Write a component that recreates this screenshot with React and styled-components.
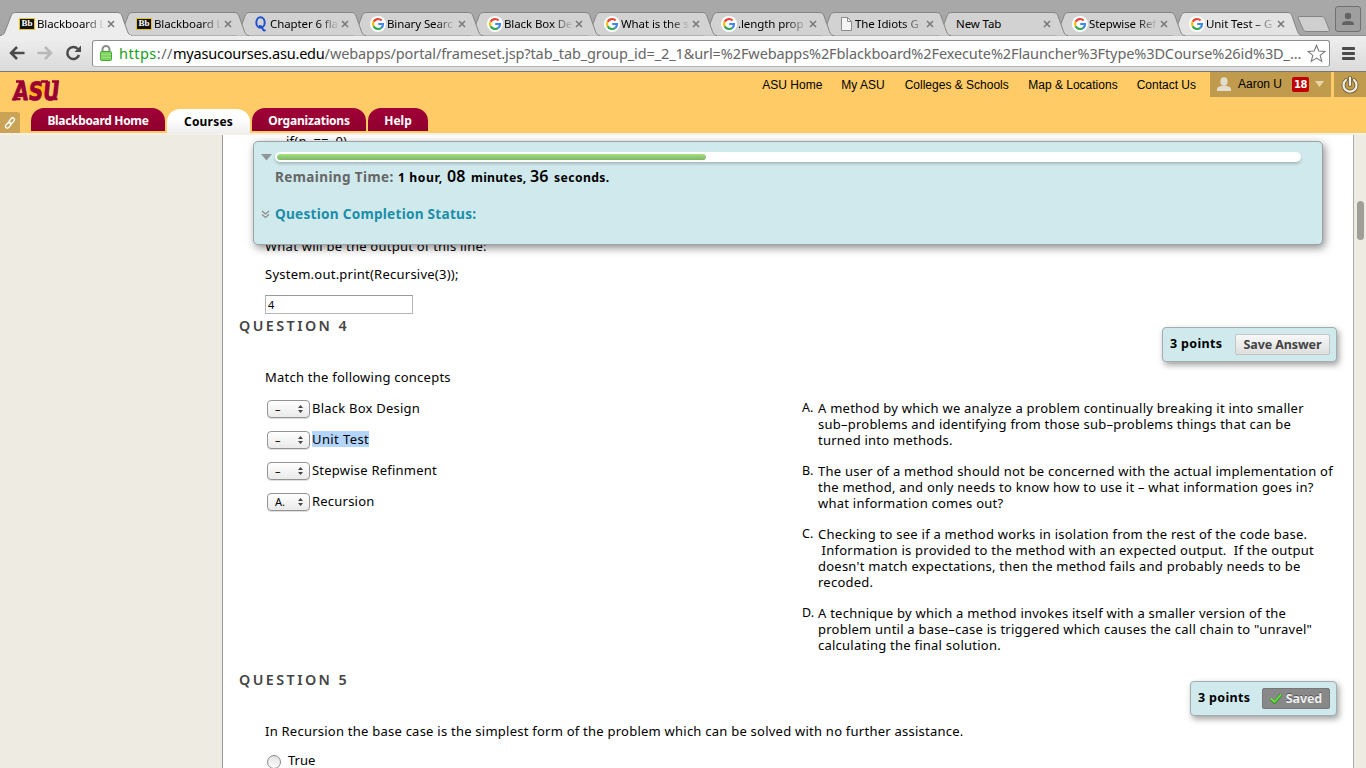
import React from 'react';
import styled, { createGlobalStyle, css } from 'styled-components';

const GlobalStyle = createGlobalStyle`
  *, *::before, *::after { box-sizing: border-box; }
  html, body { margin: 0; padding: 0; overflow: hidden; }
  body { font-family: 'Noto Sans', 'Open Sans', sans-serif; font-size: 13px; line-height: 16px; color: #000; }
`;

const Window = styled.div`
  width: 1366px;
  height: 768px;
  display: flex;
  flex-direction: column;
  overflow: hidden;
  position: relative;
`;

/* ---------- browser chrome ---------- */
const TabStrip = styled.div`
  height: 35px;
  padding-top: 12px;
  display: flex;
  flex: none;
  position: relative;
  background: linear-gradient(#a9a9a9, #a6a6a6);
`;
const TabBox = styled.div`
  width: 117px;
  height: 24px;
  flex: none;
  position: relative;
  display: flex;
  align-items: center;
  padding-left: ${(p) => (p.$bare ? 20 : 19)}px;
  z-index: ${(p) => p.$z};
`;
const TabShape = styled.svg`
  position: absolute;
  left: 0;
  top: 0;
`;
const Favicon = styled.span`
  position: relative;
  width: 16px;
  height: 16px;
  margin-right: ${(p) => (p.$wide ? 2 : 1)}px;
  flex: none;
  display: flex;
`;
const BbIcon = styled.span`
  width: 16px;
  height: 12px;
  margin-top: 2px;
  background: #111;
  border: 1px solid #e9c414;
  color: #fff;
  font: bold 9px/9px 'Liberation Serif', serif;
  text-align: center;
`;
const TabTitle = styled.span`
  position: relative;
  flex: 1;
  min-width: 0;
  white-space: nowrap;
  font-size: 11.5px;
  letter-spacing: -0.1px;
  line-height: 16px;
  mask-image: ${(p) => (p.$bare ? 'none' : 'linear-gradient(90deg, #000 70%, transparent 100%)')};
`;
const TabClose = styled.svg`
  position: relative;
  margin: 0 2px 0 2px;
  flex: none;
`;
const NewTab = styled.svg`
  flex: none;
  margin: 4px 0 0 10px;
`;
const Profile = styled.div`
  position: absolute;
  right: 5px;
  top: 6px;
  width: 26px;
  height: 26px;
  border: 1px solid #707070;
  border-radius: 3px;
  background: #9f9f9f;
  display: flex;
  justify-content: center;
  align-items: center;
`;
const Toolbar = styled.div`
  height: 37px;
  flex: none;
  display: flex;
  align-items: center;
  padding: 0 11px 1px 9px;
  border-top: 1px solid #8f8f8f;
  border-bottom: 1px solid #777;
  background: linear-gradient(#efefef, #dadada);
  position: relative;
`;
const NavIcons = styled.div`
  width: 83px;
  display: flex;
  gap: 12px;
  flex: none;
`;
const Omnibox = styled.div`
  width: 1238px;
  height: 27px;
  flex: none;
  display: flex;
  align-items: center;
  border: 1px solid #8e8e8e;
  border-bottom-color: #b4b4b4;
  border-radius: 3px;
  background: #fff;
  padding: 0 3px 0 6px;
`;
const OmniIcon = styled.svg` flex: none; `;
const Url = styled.span`
  flex: 1;
  min-width: 0;
  margin-left: 6px;
  white-space: nowrap;
  font-size: 14.5px;
  line-height: 22px;
  color: #666;
`;
const Scheme = styled.span` letter-spacing: 0.5px; `;
const Secure = styled.span` color: #14a01c; `;
const Host = styled.span` color: #000; letter-spacing: -0.2px; `;
const Path = styled.span` letter-spacing: -0.11px; `;
const MenuIcon = styled.div`
  width: 13px;
  margin-left: 12px;
  display: flex;
  flex-direction: column;
  gap: 2px;
`;
const MenuBar = styled.span`
  height: 3px;
  border-radius: 1px;
  background: #4b4b4b;
`;

/* ---------- site header ---------- */
const SiteHeader = styled.header`
  height: 61px;
  flex: none;
  background: #fecb66;
  display: flex;
  flex-direction: column;
  justify-content: space-between;
`;
const HeaderTop = styled.div`
  display: flex;
  height: 36px;
  justify-content: space-between;
  align-items: flex-start;
`;
const Logo = styled.svg` margin: 7px 0 0 11px; overflow: visible; `;
const Links = styled.nav`
  display: flex;
  font: 12px/14px 'Liberation Sans', Arial, sans-serif;
`;
const TopLink = styled.a`
  margin: 6px ${(p) => p.$gap}px 0 0;
  white-space: nowrap;
`;
const UserBox = styled.div`
  width: 121px;
  height: 25px;
  display: flex;
  align-items: center;
  background: #c19b4d;
  padding: 0 0 1px 7px;
  margin-right: 3px;
  flex: none;
`;
const UserName = styled.span` margin: 0 10px 0 7px; white-space: nowrap; `;
const Count = styled.span`
  width: 17px;
  height: 15px;
  border-radius: 2px;
  background: #c00000;
  color: #fff;
  font: bold 10px/15px 'DejaVu Sans', sans-serif;
  letter-spacing: -0.5px;
  text-align: center;
  margin-right: 6px;
`;
const PowerBox = styled.div`
  width: 32px;
  height: 25px;
  background: #c19b4d;
  display: flex;
  align-items: center;
  justify-content: center;
  flex: none;
`;
const HeaderTabs = styled.div`
  display: flex;
  align-items: flex-start;
  height: 25px;
`;
const LinkChip = styled.span`
  width: 20px;
  height: 21px;
  margin: 4px 11px 0 0;
  border-radius: 0 3px 0 0;
  background: #cba356;
  display: flex;
  align-items: center;
  justify-content: center;
`;
const SiteTab = styled.a`
  width: ${(p) => p.$w}px;
  height: 23px;
  margin-right: 2px;
  border-radius: 13px 13px 0 0;
  background: linear-gradient(#a00038, #8f002c);
  color: #fff;
  font-weight: bold;
  font-size: 12px;
  line-height: 25px;
  text-align: center;
  letter-spacing: ${(p) => p.$ls || 0}px;
  white-space: nowrap;
  ${(p) => p.$active && css`
    margin-top: 1px;
    height: 24px;
    background: linear-gradient(#fff 40%, #eeeeee);
    color: #000;
  `}
`;

/* ---------- page ---------- */
const Page = styled.div`
  flex: 1;
  display: flex;
  border-top: 2px solid #f4f0e6;
  background: #eeebe3;
  overflow: hidden;
  position: relative;
`;
const Main = styled.main`
  margin-left: 222px;
  width: 1132px;
  flex: none;
  background: #fff;
  border-left: 1px solid #999;
  border-right: 1px solid #aaa;
  padding: 0 16px;
`;
const ScrollThumb = styled.div`
  width: 7px;
  height: 39px;
  margin: 66px 0 0 3px;
  border-radius: 4px;
  background: #9f9f97;
`;
const Prev = styled.div`
  height: 183px;
  padding-left: 26px;
  margin-top: -2px;
  display: flex;
  flex-direction: column;
`;
const CodeLine = styled.div`
  margin: 0 0 89px 21px;
  word-spacing: 3px;
  letter-spacing: 0.25px;
`;
const Line = styled.p`
  margin: 0 0 ${(p) => p.$gap || 0}px;
  white-space: pre;
  letter-spacing: 0.238px;
`;
const Answer = styled.div`
  width: 148px;
  height: 19px;
  border: 1px solid #b5b5b5;
  border-top-color: #999;
  padding-left: 2px;
  font-size: 11px;
  line-height: 18px;
`;
const Question = styled.section` height: 354px; `;
const QuestionHead = styled.div`
  height: 20px;
  display: flex;
  justify-content: space-between;
  align-items: flex-start;
`;
const QuestionTitle = styled.h3`
  margin: 0;
  font-size: 14.3px;
  font-weight: 650;
  line-height: 20px;
  letter-spacing: 2.45px;
  color: #444;
`;
const Points = styled.div`
  width: ${(p) => p.$w}px;
  height: 35px;
  margin-top: 11px;
  flex: none;
  display: flex;
  justify-content: space-between;
  align-items: center;
  padding: 0 6px 0 7px;
  background: #d0e9ed;
  border: 1px solid #a3acae;
  border-radius: 4px;
  box-shadow: 2px 3px 6px rgba(0, 0, 0, 0.38);
`;
const PointsLabel = styled.span`
  font-size: 12.5px;
  font-weight: bold;
  letter-spacing: 0.35px;
  margin-top: -2px;
`;
const SaveButton = styled.button`
  width: ${(p) => p.$w}px;
  height: 21px;
  padding: 0;
  display: flex;
  align-items: center;
  justify-content: center;
  gap: 4px;
  border: 1px solid #c4c4c4;
  border-radius: 2px;
  background: linear-gradient(#f8f8f8, #dedede);
  font: bold 12.5px/18px 'Noto Sans', sans-serif;
  letter-spacing: -0.1px;
  color: #444;
  white-space: nowrap;
  ${(p) => p.$saved && css`
    background: #888;
    border-color: #777;
    color: #eee;
    text-shadow: 0 -1px 0 #555;
  `}
`;
const QuestionBody = styled.div`
  padding: 33px 0 0 26px;
`;
const Columns = styled.div`
  display: flex;
  padding-top: 15px;
`;
const MatchList = styled.div`
  width: 537px;
  flex: none;
  display: flex;
  flex-direction: column;
  gap: 15px;
  padding-left: 2px;
`;
const MatchRow = styled.div`
  height: 16px;
  display: flex;
  align-items: flex-start;
`;
const Select = styled.span`
  width: 43px;
  height: 18px;
  margin-right: 2px;
  border: 1px solid #949494;
  border-radius: 4px;
  background: linear-gradient(#fff, #eaeaea);
  box-shadow: 0 1px 0 rgba(0, 0, 0, 0.12);
  display: flex;
  align-items: center;
  justify-content: space-between;
  padding: 0 6px 0 7px;
  font-size: 11px;
`;
const Term = styled.span`
  letter-spacing: ${(p) => (p.$marked ? 0.4 : 0.22)}px;
  white-space: nowrap;
  background: ${(p) => (p.$marked ? '#b4d5fe' : 'transparent')};
`;
const Definitions = styled.div`
  display: flex;
  flex-direction: column;
  gap: 15px;
`;
const Definition = styled.div`
  display: grid;
  grid-template-columns: 16px 1fr;
`;
const Letter = styled.span`
  font-size: 12.5px;
  line-height: 15px;
  white-space: nowrap;
`;
const RadioRow = styled.label`
  display: flex;
  margin-top: 13px;
  padding-left: 2px;
`;
const Radio = styled.span`
  width: 14px;
  height: 14px;
  margin: 3px 7px 0 0;
  border: 1px solid #888;
  border-radius: 50%;
  background: linear-gradient(#e2e2e2, #fff);
`;

/* ---------- floating timer ---------- */
const Timer = styled.aside`
  position: absolute;
  left: 253px;
  top: 6px;
  width: 1070px;
  height: 104px;
  padding: 10px 21px 0 7px;
  background: #d0e9ed;
  border: 1px solid #9aa3a5;
  border-radius: 5px;
  box-shadow: 2px 3px 8px rgba(0, 0, 0, 0.45);
`;
const TimerRow = styled.div`
  display: flex;
  align-items: center;
  height: ${(p) => p.$h}px;
  margin-top: ${(p) => p.$top || 0}px;
`;
const Mark = styled.span`
  width: 14px;
  flex: none;
  display: flex;
  align-items: center;
`;
const Track = styled.div`
  width: 1026px;
  height: 10px;
  padding: 2px;
  border-radius: 5px;
  background: #fff;
  box-shadow: 0 2px 3px rgba(0, 0, 0, 0.2);
`;
const Fill = styled.div`
  width: 429px;
  height: 6px;
  border-radius: 3px;
  background: linear-gradient(#a4e084, #7fb563);
`;
const Remaining = styled.div`
  font-weight: bold;
  font-size: 12.2px;
  letter-spacing: 0.4px;
  white-space: nowrap;
  display: flex;
  align-items: baseline;
  line-height: 20px;
`;
const RemainingLabel = styled.span`
  width: 123px;
  font-size: 13.5px;
  color: #666;
`;
const Unit = styled.span`
  width: ${(p) => p.$w}px;
  letter-spacing: ${(p) => p.$ls || 0.4}px;
`;
const Digits = styled.span`
  width: ${(p) => p.$w}px;
  font-size: 16px;
  font-weight: 600;
  letter-spacing: 0;
`;
const Status = styled.span`
  font-weight: bold;
  font-size: 13.6px;
  letter-spacing: 0.26px;
  color: #1b8ea9;
  white-space: nowrap;
`;

const GoogleIcon = () => (
  <svg width="16" height="16" viewBox="0 0 16 16">
    <circle cx="8" cy="8" r="8" fill="#fff" />
    <g fill="none" strokeWidth="2.2">
      <path d="M11.6 4.5A5 5 0 0 0 3.6 5.7" stroke="#ea4335" />
      <path d="M3.6 5.7A5 5 0 0 0 3.6 10.3" stroke="#fbbc05" />
      <path d="M3.6 10.3A5 5 0 0 0 11.3 11.8" stroke="#34a853" />
      <path d="M11.3 11.8A5 5 0 0 0 13 8H8.2" stroke="#4285f4" />
    </g>
  </svg>
);
const QuizletIcon = () => (
  <svg width="16" height="16" viewBox="0 0 16 16">
    <ellipse cx="7.5" cy="6.500" rx="4.200" ry="5.300" fill="none" stroke="#1d4fd0" strokeWidth="2" />
    <path d="M6 10Q8.500 9.500 9.500 12.500T12.500 14" fill="none" stroke="#1d4fd0" strokeWidth="2" />
  </svg>
);
const PageIcon = () => (
  <svg width="16" height="16" viewBox="0 0 16 16">
    <path d="M3.5 1.5H9.5L13.5 5.5V14.5H3.5Z" fill="#f5f5f5" stroke="#8a8a8a" />
    <path d="M9.5 1.5V5.5H13.5" fill="none" stroke="#8a8a8a" />
  </svg>
);
const icons = {
  bb: <BbIcon>Bb</BbIcon>,
  q: <QuizletIcon />,
  g: <GoogleIcon />,
  page: <PageIcon />,
};

const tabs = [
  { icon: 'bb', title: 'Blackboard L', active: true },
  { icon: 'bb', title: 'Blackboard L' },
  { icon: 'q', title: 'Chapter 6 fla' },
  { icon: 'g', title: 'Binary Searc' },
  { icon: 'g', title: 'Black Box De' },
  { icon: 'g', title: 'What is the s' },
  { icon: 'g', title: '.length prop' },
  { icon: 'page', title: 'The Idiots G' },
  { title: 'New Tab' },
  { icon: 'g', title: 'Stepwise Ref' },
  { icon: 'g', title: 'Unit Test – G', light: true },
];

const Tab = ({ tab, index }) => (
  <TabBox $z={tab.active ? 20 : 12 - index} $bare={!tab.icon}>
    <TabShape width="134" height="24">
      <path
        d="M0 23.5C3 23.5 4 22 5 19.5L11 4C12 1.5 13 .5 16 .5H117C120 .5 121 1.5 122 4L127.500 19.500C128.500 22 129.500 23.500 132 23.500"
        fill={tab.active ? '#ededed' : tab.light ? '#e3e3e3' : '#d2d2d2'}
        stroke="#858585"
      />
      {tab.active && <path d="M2 23.500H131" stroke="#ededed" />}
    </TabShape>
    {tab.icon && <Favicon $wide={tab.icon === 'bb'}>{icons[tab.icon]}</Favicon>}
    <TabTitle $bare={!tab.icon}>{tab.title}</TabTitle>
    <TabClose width="8" height="8" viewBox="0 0 8 8">
      <path d="M1 1L7 7M7 1L1 7" stroke="#777" strokeWidth="1.5" />
    </TabClose>
  </TabBox>
);

const Chrome = () => (
  <>
    <TabStrip>
      {tabs.map((t, i) => <Tab key={i} tab={t} index={i} />)}
      <NewTab width="34" height="18">
        <path d="M3 .5H24C26 .5 27 1 28 3L32 13C33 15 32 15.500 30 15.500H10C8 15.500 7 15 6 13L1.500 3C1 1 1 .500 3 .500Z" fill="#cfcfcf" stroke="#858585" />
      </NewTab>
      <Profile>
        <svg width="14" height="14" viewBox="0 0 14 14" fill="#636363">
          <circle cx="7" cy="4" r="3.2" />
          <path d="M1 13V11.500Q1 9 7 9T13 11.500V13Z" />
        </svg>
      </Profile>
    </TabStrip>
    <Toolbar>
      <NavIcons>
        <svg width="16" height="16" viewBox="0 0 16 16" fill="none" stroke="#4a4a4a" strokeWidth="2.500">
          <path d="M15.500 8H2.500M8 2L2 8L8 14" />
        </svg>
        <svg width="16" height="16" viewBox="0 0 16 16" fill="none" stroke="#b8b8b8" strokeWidth="2.500">
          <path d="M.500 8H13.500M8 2L14 8L8 14" />
        </svg>
        <svg width="17" height="16" viewBox="0 0 17 16">
          <path d="M12.800 4A6 6 0 1 0 14 10" fill="none" stroke="#4a4a4a" strokeWidth="2.500" />
          <path d="M16 .500V7H9.500Z" fill="#4a4a4a" />
        </svg>
      </NavIcons>
      <Omnibox>
        <OmniIcon width="14" height="18" viewBox="0 0 14 18">
          <path d="M3.500 9V5.500a3.500 3.500 0 0 1 7 0V9" fill="none" stroke="#8b8b8b" strokeWidth="2" />
          <rect x="1.500" y="7.500" width="11" height="9" rx="1" fill="#7dd45c" stroke="#4ba836" />
          <path d="M2 10.500H12M2 13.500H12" stroke="#9be37d" />
        </OmniIcon>
        <Url>
          <Scheme><Secure>https</Secure>://</Scheme><Host>myasucourses.asu.edu</Host>
          <Path>/webapps/portal/frameset.jsp?tab_tab_group_id=_2_1&amp;url=%2Fwebapps%2Fblackboard%2Fexecute%2Flauncher%3Ftype%3DCourse%26id%3D_...</Path>
        </Url>
        <OmniIcon width="19" height="19" viewBox="0 0 18 18">
          <path d="M9 1.200L11.200 6.600L17 7L12.500 10.800L14 16.500L9 13.400L4 16.500L5.500 10.800L1 7L6.800 6.600Z" fill="#fff" stroke="#777" />
        </OmniIcon>
      </Omnibox>
      <MenuIcon><MenuBar /><MenuBar /><MenuBar /></MenuIcon>
    </Toolbar>
  </>
);

const Header = () => (
  <SiteHeader>
    <HeaderTop>
      <Logo width="50" height="24" viewBox="0 0 50 24">
        <defs>
          <radialGradient id="sun">
            <stop offset="0" stopColor="#ffb310" />
            <stop offset="0.600" stopColor="#fdb61d" />
            <stop offset="1" stopColor="#fdb61d" stopOpacity="0" />
          </radialGradient>
        </defs>
        <circle cx="26" cy="11" r="11" fill="url(#sun)" />
        <g transform="skewX(-6)" fontFamily="DejaVu Sans, sans-serif" fontWeight="bold" fontSize="25" fill="#990033" stroke="#990033" strokeWidth="0.800">
          <text x="3.500" y="20.500" textLength="46" lengthAdjust="spacingAndGlyphs">ASU</text>
        </g>
        <path d="M1.500 20H9.500M5 2.500H13M30 2.500H37M41 2.500H48M43 20H46.500" stroke="#990033" strokeWidth="2.600" />
      </Logo>
      <Links>
        <TopLink $gap={19}>ASU Home</TopLink>
        <TopLink $gap={20}>My ASU</TopLink>
        <TopLink $gap={19.5}>Colleges &amp; Schools</TopLink>
        <TopLink $gap={19}>Map &amp; Locations</TopLink>
        <TopLink $gap={14}>Contact Us</TopLink>
        <UserBox>
          <svg width="14" height="14" viewBox="0 0 14 14" fill="#e4dccb">
            <ellipse cx="7" cy="4.500" rx="3.600" ry="4.300" />
            <path d="M0 14V12Q0 9 7 8.500Q14 9 14 12V14Z" />
          </svg>
          <UserName>Aaron U</UserName>
          <Count>18</Count>
          <svg width="9" height="6"><path d="M0 0H9L4.500 6Z" fill="#e8d5aa" /></svg>
        </UserBox>
        <PowerBox>
          <svg width="18" height="18" viewBox="0 0 18 18" fill="none" strokeLinecap="round">
            <path d="M5 4A6.500 6.500 0 1 0 13 4M9 1.500V9" stroke="#75602f" strokeWidth="4" />
            <path d="M5 4A6.500 6.500 0 1 0 13 4M9 1.500V9" stroke="#eee" strokeWidth="2.200" />
          </svg>
        </PowerBox>
      </Links>
    </HeaderTop>
    <HeaderTabs>
      <LinkChip>
        <svg width="12" height="12" viewBox="0 0 12 12" fill="none" stroke="#fff" strokeWidth="1.300">
          <rect x="4.500" y="2" width="6.500" height="3.600" rx="1.800" transform="rotate(-50 7.700 3.800)" />
          <rect x="1" y="6.400" width="6.500" height="3.600" rx="1.800" transform="rotate(-50 4.300 8.200)" />
        </svg>
      </LinkChip>
      <SiteTab $w={134} $ls={-0.33}>Blackboard Home</SiteTab>
      <SiteTab $w={83} $ls={0.2} $active>Courses</SiteTab>
      <SiteTab $w={114} $ls={-0.2}>Organizations</SiteTab>
      <SiteTab $w={60}>Help</SiteTab>
    </HeaderTabs>
  </SiteHeader>
);

const terms = [
  { value: '–', text: 'Black Box Design' },
  { value: '–', text: 'Unit Test', marked: true },
  { value: '–', text: 'Stepwise Refinment' },
  { value: 'A.', text: 'Recursion' },
];
const definitions = [
  ['A.', ['A method by which we analyze a problem continually breaking it into smaller', 'sub–problems and identifying from those sub–problems things that can be', 'turned into methods.']],
  ['B.', ['The user of a method should not be concerned with the actual implementation of', 'the method, and only needs to know how to use it – what information goes in?', 'what information comes out?']],
  ['C.', ['Checking to see if a method works in isolation from the rest of the code base.', ' Information is provided to the method with an expected output.  If the output', "doesn't match expectations, then the method fails and probably needs to be", 'recoded.']],
  ['D.', ['A technique by which a method invokes itself with a smaller version of the', 'problem until a base–case is triggered which causes the call chain to "unravel"', 'calculating the final solution.']],
];

export default function App() {
  return (
    <Window>
      <GlobalStyle />
      <Chrome />
      <Header />
      <Page>
        <Main>
          <Prev>
            <CodeLine>if(n == 0)</CodeLine>
            <Line $gap={12}>What will be the output of this line:</Line>
            <Line $gap={13}>System.out.print(Recursive(3));</Line>
            <Answer>4</Answer>
          </Prev>
          <Question>
            <QuestionHead>
              <QuestionTitle>QUESTION 4</QuestionTitle>
              <Points $w={175}>
                <PointsLabel>3 points</PointsLabel>
                <SaveButton $w={95}>Save Answer</SaveButton>
              </Points>
            </QuestionHead>
            <QuestionBody>
              <Line>Match the following concepts</Line>
              <Columns>
                <MatchList>
                  {terms.map((t) => (
                    <MatchRow key={t.text}>
                      <Select>
                        {t.value}
                        <svg width="5" height="8"><path d="M0 3L2.500 0L5 3ZM0 5L2.500 8L5 5Z" fill="#444" /></svg>
                      </Select>
                      <Term $marked={t.marked}>{t.text}</Term>
                    </MatchRow>
                  ))}
                </MatchList>
                <Definitions>
                  {definitions.map(([letter, lines]) => (
                    <Definition key={letter}>
                      <Letter>{letter}</Letter>
                      <div>{lines.map((l) => <Line key={l}>{l}</Line>)}</div>
                    </Definition>
                  ))}
                </Definitions>
              </Columns>
            </QuestionBody>
          </Question>
          <Question>
            <QuestionHead>
              <QuestionTitle>QUESTION 5</QuestionTitle>
              <Points $w={147}>
                <PointsLabel>3 points</PointsLabel>
                <SaveButton $w={68} $saved>
                  <svg width="12" height="11" viewBox="0 0 12 11">
                    <path d="M1 6L4.500 9.500L11 1.500" fill="none" stroke="#2f8a1c" strokeWidth="3" />
                    <path d="M1 5.500L4.500 9L11 1.500" fill="none" stroke="#6fe04a" strokeWidth="1.800" />
                  </svg>
                  Saved
                </SaveButton>
              </Points>
            </QuestionHead>
            <QuestionBody>
              <Line>In Recursion the base case is the simplest form of the problem which can be solved with no further assistance.</Line>
              <RadioRow><Radio />True</RadioRow>
            </QuestionBody>
          </Question>
        </Main>
        <ScrollThumb />
        <Timer>
          <TimerRow $h={10}>
            <Mark><svg width="12" height="7"><path d="M0 0H11L5.500 6.500Z" fill="#8f9799" /></svg></Mark>
            <Track><Fill /></Track>
          </TimerRow>
          <TimerRow $h={20} $top={5}>
            <Mark />
            <Remaining>
              <RemainingLabel>Remaining Time:</RemainingLabel>
              <Unit $w={49} $ls={0.6}>1 hour,</Unit>
              <Digits $w={24}>08</Digits>
              <Unit $w={59} $ls={0.25}>minutes,</Unit>
              <Digits $w={24}>36</Digits>
              <Unit $w={60}>seconds.</Unit>
            </Remaining>
          </TimerRow>
          <TimerRow $h={20} $top={17}>
            <Mark>
              <svg width="9" height="9" fill="none" stroke="#8a8a8a" strokeWidth="1.200"><path d="M1 1L4.500 4L8 1M1 4.500L4.500 7.500L8 4.500" /></svg>
            </Mark>
            <Status>Question Completion Status:</Status>
          </TimerRow>
        </Timer>
      </Page>
    </Window>
  );
}
